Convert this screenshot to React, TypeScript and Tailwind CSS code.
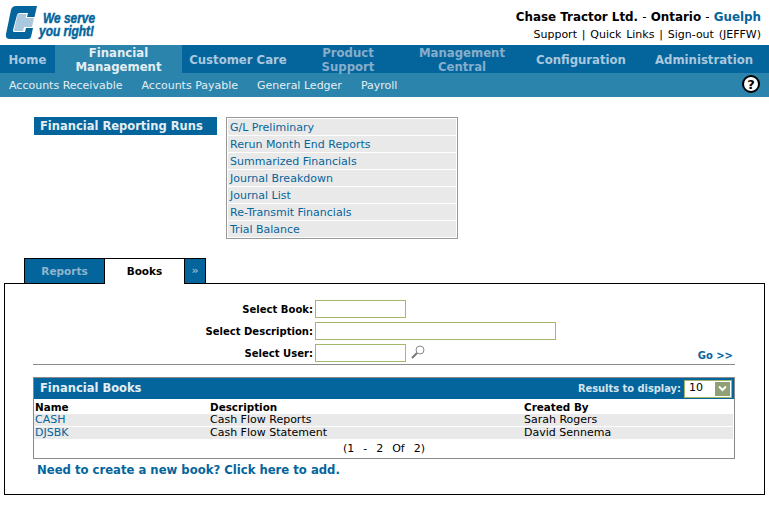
const blue = "text-[#04659c]";

function Logo() {
  return (
    <svg width="120" height="42" viewBox="0 0 120 42" className="block">
      <path d="M14 6 H37 L34.500 17 H27 L28 13 H20 Q17.500 13 17 15 L13 30 Q12.500 32 15 32 H25 L26 28 H33 L31 37 Q30.500 39 28 39 H10 Q5 39 6 34 L11 10 Q12 6 16 6 Z" fill="#04659c" />
      <path d="M19.500 14 H26.500 L25.500 18 H34 L32 27 H24 L23 31 H15 Q14 31 14 30 L17.500 15 Z" fill="#a9c8de" />
      <text x="43" y="23" fontFamily="'Liberation Sans', sans-serif" fontWeight="700" fontStyle="italic" fontSize="14" textLength="52" lengthAdjust="spacingAndGlyphs" fill="#04659c" stroke="#04659c" strokeWidth="0.5">We serve</text>
      <text x="39" y="36" fontFamily="'Liberation Sans', sans-serif" fontWeight="700" fontStyle="italic" fontSize="14" textLength="55" lengthAdjust="spacingAndGlyphs" fill="#04659c" stroke="#04659c" strokeWidth="0.5">you right!</text>
    </svg>
  );
}

function Nav({ label, w, active, dim }: { label: React.ReactNode; w: string; active?: boolean; dim?: boolean }) {
  return (
    <div className={`${w} pt-[1px] flex items-center justify-center text-center text-[11.700px] leading-[14px] font-bold ${active ? "bg-[#2a84ac] text-[#e4eef4]" : dim ? "text-[#86aecb]" : "text-[#a9c8de]"}`}>
      {label}
    </div>
  );
}

function Field({ label, w, children }: { label: string; w: string; children?: React.ReactNode }) {
  return (
    <div className="flex items-center h-[22px]">
      <div className="w-[282px] pr-[2px] pt-[2px] text-right font-bold text-[10.050px] text-black">{label}</div>
      <div className={`${w} h-[18px] border border-[#a3b86c] bg-white`} />
      {children}
    </div>
  );
}

const menu = ["G/L Preliminary", "Rerun Month End Reports", "Summarized Financials", "Journal Breakdown", "Journal List", "Re-Transmit Financials", "Trial Balance"];
const rows = [
  ["CASH", "Cash Flow Reports", "Sarah Rogers"],
  ["DJSBK", "Cash Flow Statement", "David Sennema"],
];

export default function App() {
  return (
    <div className="w-[769px] h-[521px] overflow-hidden bg-white text-[11px] text-black" style={{ fontFamily: "'DejaVu Sans', Verdana, sans-serif" }}>
      <header className="h-[45px] flex justify-between">
        <Logo />
        <div className="pr-[8px] pt-[10px] text-right">
          <div className="font-bold text-[11.900px] leading-[15px]">
            Chase Tractor Ltd. <span className="font-normal">-</span> Ontario <span className="font-normal">-</span> <span className={blue}>Guelph</span>
          </div>
          <div className="mt-[3px] text-[11px] leading-[14px] [word-spacing:1.300px]">Support | Quick Links | Sign-out (JEFFW)</div>
        </div>
      </header>
      <nav className="h-[28px] bg-[#04659c] flex">
        <Nav w="w-[55px]" label="Home" />
        <Nav w="w-[127px]" active label={<>Financial<br />Management</>} />
        <Nav w="w-[112px]" label="Customer Care" />
        <Nav w="w-[108px]" dim label={<>Product<br />Support</>} />
        <Nav w="w-[120px]" dim label={<>Management<br />Central</>} />
        <Nav w="w-[118px]" label="Configuration" />
        <Nav w="w-[128px]" label="Administration" />
      </nav>
      <div className="h-[24px] bg-[#2a84ac] flex items-center pl-[9px] pr-[9px] gap-[19px] text-[#e4eef4] text-[11px]">
        <span className="pt-[2px]">Accounts Receivable</span>
        <span className="pt-[2px]">Accounts Payable</span>
        <span className="pt-[2px]">General Ledger</span>
        <span className="pt-[2px]">Payroll</span>
        <span className="ml-auto -mt-[2px] w-[18px] h-[18px] rounded-full bg-white border-2 border-black flex items-center justify-center font-bold text-[13px] leading-none text-black">?</span>
      </div>

      <div className="flex pt-[20px] pl-[34px]">
        <div className="w-[183px] h-[18px] bg-[#04659c] text-[#e4eef4] font-bold text-[11.500px] leading-[18px] pl-[6px]">Financial Reporting Runs</div>
        <div className="ml-[9px] w-[232px] h-[122px] border border-[#999999] bg-white flex flex-col gap-[1px] p-[1px]">
          {menu.map((m) => (
            <div key={m} className={`h-[16px] bg-[#e9e9e9] pl-[2px] ${blue} text-[11px] leading-[17px]`}>{m}</div>
          ))}
        </div>
      </div>

      <div className="flex pl-[24px] mt-[19px] h-[26px] relative z-10">
        <div className="w-[81px] h-[26px] pt-[1px] bg-[#04659c] border border-black text-[#8fb5cf] font-bold text-[10.500px] flex items-center justify-center">Reports</div>
        <div className="w-[79px] h-[26px] pt-[1px] bg-white border-t border-black text-black font-bold text-[10.500px] flex items-center justify-center">Books</div>
        <div className="w-[22px] h-[26px] pt-[1px] bg-[#04659c] border border-black text-[#8fb5cf] font-bold text-[11px] flex items-center justify-center">»</div>
      </div>

      <section className="ml-[4px] w-[761px] h-[212px] -mt-[1px] border border-black bg-white px-[28px]">
        <div className="pt-[14px]">
          <Field label="Select Book:" w="w-[91px]" />
          <Field label="Select Description:" w="w-[241px]" />
          <Field label="Select User:" w="w-[91px]">
            <svg width="16" height="16" viewBox="0 0 16 16" className="ml-[4px] -mt-[3px]">
              <circle cx="10" cy="6" r="4" fill="#fff" stroke="#8a8a8a" strokeWidth="1" />
              <path d="M7 9 L2 14" stroke="#777" strokeWidth="2" />
            </svg>
          </Field>
        </div>
        <div className="relative h-[2px] border-t border-[#8a8a8a] w-[702px]">
          <span className={`absolute right-[2px] -top-[16px] font-bold text-[10px] leading-[14px] ${blue}`}>Go &gt;&gt;</span>
        </div>
        <div className="mt-[11px] w-[702px] h-[82px] border border-[#8a8a8a]">
          <div className="h-[21px] bg-[#04659c] flex items-center justify-between pl-[6px] pr-[2px]">
            <span className="pt-[1px] font-bold text-[11.500px] text-[#e4eef4]">Financial Books</span>
            <div className="flex items-center gap-[3px]">
              <span className="pt-[2px] font-bold text-[9.900px] text-[#d5e4ee]">Results to display:</span>
              <div className="w-[48px] h-[18px] bg-white border border-[#a3b86c] flex items-center justify-between pl-[4px] pr-[1px] text-[11px]">
                10
                <span className="w-[15px] h-[14px] bg-[#8f9f76] flex items-center justify-center">
                  <svg width="9" height="7" viewBox="0 0 9 7"><path d="M1 1.500 L4.500 5 L8 1.500" fill="none" stroke="#fff" strokeWidth="2" /></svg>
                </span>
              </div>
            </div>
          </div>
          <div className="grid grid-cols-[175px_314px_1fr] font-bold text-[10.400px] leading-[14px] pl-[1px] pt-[1px]">
            <span>Name</span><span>Description</span><span>Created By</span>
          </div>
          {rows.map((r) => (
            <div key={r[0]} className="grid grid-cols-[175px_314px_1fr] bg-[#e9e9e9] text-[11px] leading-[12px] h-[12px] mb-[1px] pl-[1px] mr-[1px]">
              <span className={blue}>{r[0]}</span><span>{r[1]}</span><span>{r[2]}</span>
            </div>
          ))}
          <div className="text-center text-[11px] leading-[14px] mt-[3px] whitespace-pre [word-spacing:1px]">(1  -  2  Of  2)</div>
        </div>
        <div className={`pl-[4px] pt-[3px] font-bold text-[11.650px] leading-[16px] ${blue}`}>Need to create a new book? Click here to add.</div>
      </section>
    </div>
  );
}
